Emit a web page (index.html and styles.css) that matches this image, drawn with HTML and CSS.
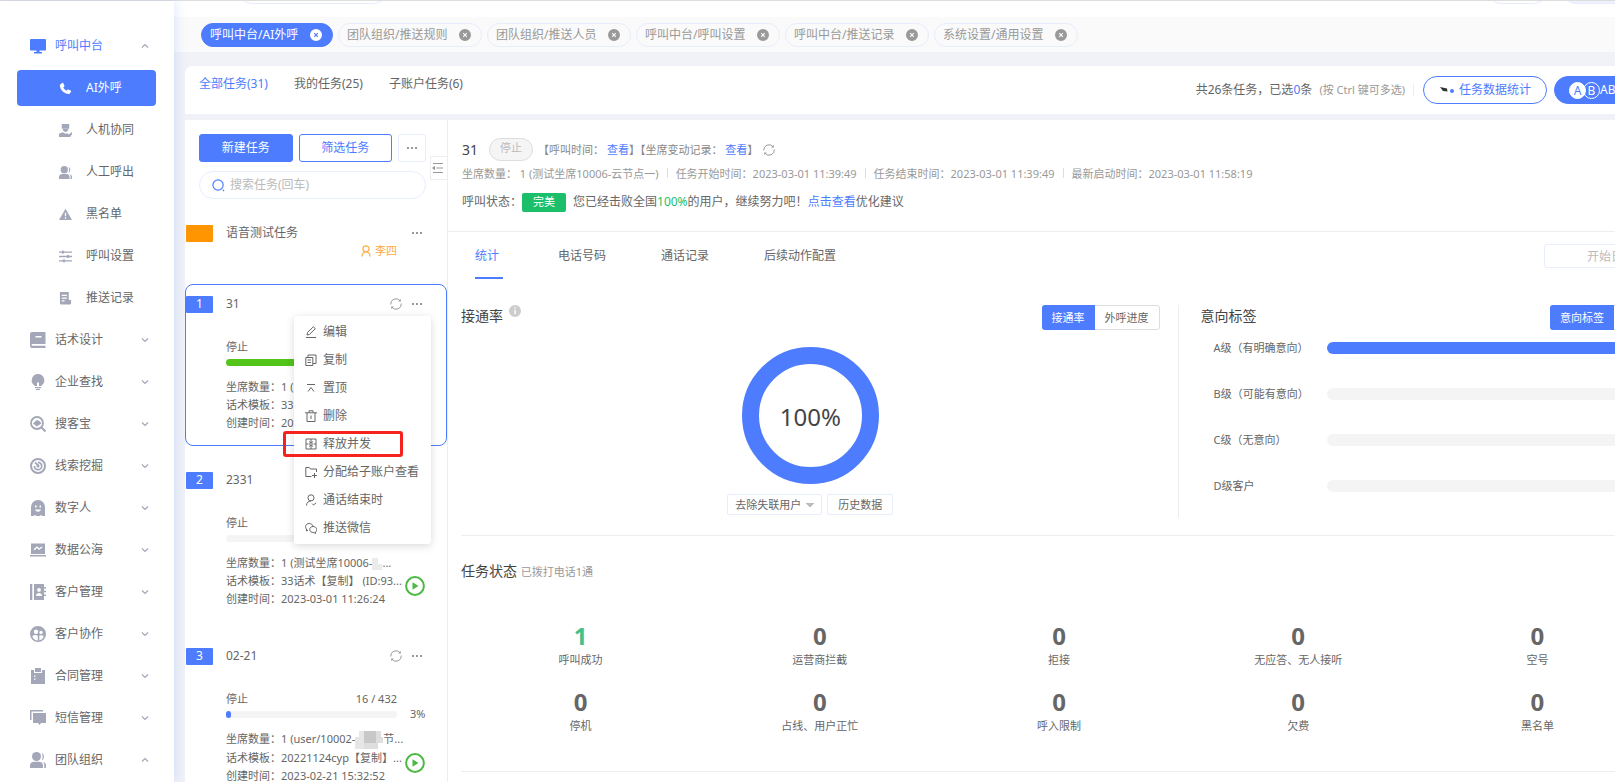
FILE: index.html
```html
<!DOCTYPE html>
<html lang="zh-CN">
  <head>
    <meta charset="utf-8">
    <title>呼叫中台 - AI外呼</title>
    <link rel="stylesheet" href="styles.css">
  </head>
  <body>
    <!-- icon sprite -->
    <svg class="sprite" aria-hidden="true">
      <symbol id="i-monitor" viewBox="0 0 16 16"><path d="M1 1h14a1 1 0 0 1 1 1v9.500a1 1 0 0 1-1 1H9.500V14H12v1.500H4V14h2.500v-1.500H1a1 1 0 0 1-1-1V2a1 1 0 0 1 1-1z"/></symbol>
      <symbol id="i-phone" viewBox="0 0 14 14"><path d="M1.300 2.600 3.400 1c.4-.3.9-.2 1.100.2l1.300 2.600c.2.4.1.8-.2 1.100l-1 .9c.8 1.500 1.900 2.600 3.500 3.500l1-1c.3-.3.7-.4 1.100-.2l2.600 1.400c.4.2.5.7.200 1l-1.600 2.100c-.3.3-.6.400-1 .4C5.200 12.500 1.200 8.600.9 3.600c0-.4.1-.7.4-1z"/></symbol>
      <symbol id="i-cowork" viewBox="0 0 14 14"><path d="M3 0h8v5H3zM4 5.500h6C10 7 9 8.500 7 8.500S4 7 4 5.500zM0 10.500 4 9l3 1.500L9 10l1.500 1.200L14 8.500V11l-2 3H0z"/></symbol>
      <symbol id="i-users" viewBox="0 0 16 16"><circle cx="6.500" cy="4.500" r="4.500"/><path d="M0 16v-2.500C0 11 2 9.800 4 9.800h5c2.200 0 4 1.400 4 3.700V16zM11.500.8a4.300 4.300 0 0 1 0 7.800C13 6 13 3.500 11.500.800zM13 10c2 .6 3 1.800 3 3.500V16h-1.700v-2.500c0-1.500-.4-2.600-1.300-3.500z"/></symbol>
      <symbol id="i-warn" viewBox="0 0 14 14"><path fill-rule="evenodd" d="M7 .8 14 13H0zM6.300 5v4h1.400V5zm0 5v1.500h1.400V10z"/></symbol>
      <symbol id="i-sliders" viewBox="0 0 14 14"><path d="M0 2.300h14M0 7h14M0 11.700h14" fill="none" stroke="currentColor" stroke-width="1.500"/><rect x="3" y=".800" width="2.500" height="3"/><rect x="8.500" y="5.500" width="2.500" height="3"/><rect x="4" y="10.200" width="2.500" height="3"/></symbol>
      <symbol id="i-record" viewBox="0 0 14 14"><path fill-rule="evenodd" d="M1 0h9.500v8.500H13V12a1.500 1.500 0 0 1-1.500 1.500H2.500A1.500 1.500 0 0 1 1 12zM3 3v1.200h5.500V3zm0 3v1.200h5.500V6zm0 3v1.200h3V9z"/></symbol>
      <symbol id="i-book" viewBox="0 0 16 16"><path fill-rule="evenodd" d="M2 0h13.500v12H2.500a.9.900 0 0 0 0 1.800h13V16H2a2 2 0 0 1-2-2V2a2 2 0 0 1 2-2zm3.500 4v1.500h6V4z"/></symbol>
      <symbol id="i-bulb" viewBox="0 0 16 16"><path d="M8 0a6.300 6.300 0 0 1 3.500 11.500V12h-2.500V8.500H7V12H4.500v-.5A6.300 6.300 0 0 1 8 0zM5 13h6v1.200H5zM6 15h4v1H6z"/></symbol>
      <symbol id="i-seek" viewBox="0 0 16 16"><circle cx="7" cy="7" r="6" fill="none" stroke="currentColor" stroke-width="1.800"/><path d="m11.500 11.500 4 4" stroke="currentColor" stroke-width="2"/><path d="M3 7.500 5.500 5l2-1L10 5.500l1.500 2L9 9l-2 1.500z"/></symbol>
      <symbol id="i-target" viewBox="0 0 16 16"><circle cx="8" cy="8" r="7" fill="none" stroke="currentColor" stroke-width="2"/><path d="M4.300 8a3.700 3.700 0 1 0 3.700-3.700M5 4.500l3.500 3" fill="none" stroke="currentColor" stroke-width="1.700"/><circle cx="8" cy="8" r="1.600"/></symbol>
      <symbol id="i-ghost" viewBox="0 0 16 16"><path fill-rule="evenodd" d="M1 7a7 7 0 0 1 14 0v9h-2.500l-1.500-1-1.500 1h-3L5 15l-1.500 1H1zm4-1.500v2h1.600v-2zm4.500 0v2H11v-2zM5 9.500C6 12.500 10 12.500 11 9.500z"/></symbol>
      <symbol id="i-laptop" viewBox="0 0 16 16"><path fill-rule="evenodd" d="M1 1.500h14v10.500H1zM3.500 7.300l1 1L7 6l2 2 3.500-2.500-.8-1L9.200 6.300 7 4.300zM0 13h16v1.500H0z"/></symbol>
      <symbol id="i-contacts" viewBox="0 0 16 16"><path fill-rule="evenodd" d="M0 0h2.300v16H0zM4 0h10v3h2v1.500h-2v2.300h2v1.500h-2v2.300h2V12h-2v4H4zm5 4a1.900 1.900 0 1 0 0 3.800A1.900 1.900 0 0 0 9 4zm-3 8h6c0-4-6-4-6 0z"/></symbol>
      <symbol id="i-team" viewBox="0 0 16 16"><path fill-rule="evenodd" d="M8 0a8 8 0 1 0 0 16A8 8 0 0 0 8 0zM6 3.500a2.200 2.200 0 1 1 0 4.400 2.200 2.200 0 0 1 0-4.400zm5 1.200a1.700 1.700 0 1 1 0 3.400 1.700 1.700 0 0 1 0-3.400zM2.300 10.500c1.500-1.800 4.200-1.800 5.500-.5v4.500c-2.500 0-4.500-1.500-5.500-4zM9.300 9.700c1.700-.7 3.500-.3 4.500.8-.8 2-2.200 3.300-4.500 3.900z"/></symbol>
      <symbol id="i-clip" viewBox="0 0 16 16"><path fill-rule="evenodd" d="M1 2h3v3h8V2h3v14H1zM5 0h6v4H5zM4 7.500v1.300h1.500V7.500zm0 3v1.300h1.500v-1.300z"/></symbol>
      <symbol id="i-sms" viewBox="0 0 16 16"><path d="M0 0h13v1.500H1.500V10H0zM3 3h13v10h-5l-1.500 2L8 13H3z"/></symbol>
      <symbol id="i-down" viewBox="0 0 8 8"><path d="M1 2.500 4 5.500l3-3" fill="none" stroke="currentColor" stroke-width="1.200"/></symbol>
      <symbol id="i-up" viewBox="0 0 8 8"><path d="m1 5.500 3-3 3 3" fill="none" stroke="currentColor" stroke-width="1.200"/></symbol>
      <symbol id="i-close" viewBox="0 0 12 12"><path fill-rule="evenodd" d="M6 0a6 6 0 1 0 0 12A6 6 0 0 0 6 0zM4.600 3.800 6 5.200l1.400-1.400.8.8L6.800 6l1.400 1.400-.8.8L6 6.800 4.600 8.200l-.8-.8L5.200 6 3.800 4.600z"/></symbol>
      <symbol id="i-search" viewBox="0 0 14 14"><circle cx="6.500" cy="6.500" r="5.500" fill="none" stroke="currentColor" stroke-width="1.300"/><path d="m11.500 11.500 1.500 1.500" stroke="currentColor" stroke-width="1.300"/></symbol>
      <symbol id="i-fold" viewBox="0 0 12 12"><path d="M1 1.500h10M4.500 6H11M1 10.500h10" fill="none" stroke="currentColor"/><path d="m0 6 3-2.200v4.400z"/></symbol>
      <symbol id="i-dots" viewBox="0 0 10 4"><rect y="1" width="2" height="2"/><rect x="4" y="1" width="2" height="2"/><rect x="8" y="1" width="2" height="2"/></symbol>
      <symbol id="i-refresh" viewBox="0 0 12 12"><path d="M.7 6.500A5.300 5.300 0 0 1 10 2.600M11.300 5.500A5.300 5.300 0 0 1 2 9.400" fill="none" stroke="currentColor"/><path d="M10.800 1v2.600H8.200zM1.200 11V8.400h2.600z"/></symbol>
      <symbol id="i-user" viewBox="0 0 12 12"><path d="M2 11.500C2 8.500 3.500 7 6 7s4 1.500 4 4.500M6 .8a3 3 0 1 1 0 6.100A3 3 0 0 1 6 .800z" fill="none" stroke="currentColor" stroke-width="1.200"/></symbol>
      <symbol id="i-play" viewBox="0 0 20 20"><circle cx="10" cy="10" r="8.900" fill="none" stroke="currentColor" stroke-width="2"/><path d="m7.500 6.300 6 3.700-6 3.700z"/></symbol>
      <symbol id="i-edit" viewBox="0 0 12 12"><path d="M1 11.500h10M2 9l.5-2.500L8.300.8l2 1.900-5.900 5.800z" fill="none" stroke="currentColor"/></symbol>
      <symbol id="i-copy" viewBox="0 0 12 12"><path d="M.8 3.500h7v8h-7zM3 3.500V1h8v8.500H8M2.500 6h3.500M2.500 8.500h3.500" fill="none" stroke="currentColor"/></symbol>
      <symbol id="i-top" viewBox="0 0 12 12"><path d="M2 2.500h8M3 9.500 6 5.500l3 4" fill="none" stroke="currentColor"/></symbol>
      <symbol id="i-trash" viewBox="0 0 12 12"><path d="M0 2.800h12M2 3v8.500h8V3M4 2.500V.800h4v1.700M6 5.500V9" fill="none" stroke="currentColor"/></symbol>
      <symbol id="i-release" viewBox="0 0 12 12"><path d="M1 1h10v10H1zM1 6h2.500M8.500 6H11M6 1v3.500M6 7.500V11M4 3.500l2 1.500 2-1.500M4 8.500 6 7l2 1.500M4 6h4" fill="none" stroke="currentColor"/></symbol>
      <symbol id="i-folder" viewBox="0 0 12 12"><path d="M6.500 10.500H.8V1.500h3.500l1.200 1.500h6v3M9.500 7v5M7 9.500h5" fill="none" stroke="currentColor"/></symbol>
      <symbol id="i-end" viewBox="0 0 12 12"><path d="M1.500 11.500C1.500 8.500 3.500 7 6 7M6 .8a3 3 0 1 1 0 6.100A3 3 0 0 1 6 .800zM7 9.500l1.500 1.500L11 9" fill="none" stroke="currentColor"/></symbol>
      <symbol id="i-wechat" viewBox="0 0 12 12"><path d="M3 8 1.500 9V7C-.5 5 .8 1.500 4.200 1.500c2 0 3.500 1.200 3.800 2.700M8 4.500c4 0 4.500 4 2.500 5.500v1.500L8.800 10.500C3.500 11 3.500 4.500 8 4.500z" fill="none" stroke="currentColor"/></symbol>
      <symbol id="i-info" viewBox="0 0 12 12"><path fill-rule="evenodd" d="M6 0a6 6 0 1 0 0 12A6 6 0 0 0 6 0zM5.300 2.500h1.400v1.300H5.300zm0 2.300h1.400v4.400H5.300z"/></symbol>
      <symbol id="i-mask" viewBox="0 0 28 18"><path d="M4 0h5v18H0V6h4z" fill="#e6e6e6"/><path d="M9 0h12v12H9z" fill="#c8c8c8"/><path d="M21 0h5v6h2v6h-7zM9 12h14v6H9z" fill="#dedede"/></symbol>
    </svg>

    <div class="app">
      <nav class="sidebar">
        <a class="nav open" href="#"><svg class="nav-icon"><use href="#i-monitor"/></svg>呼叫中台<svg class="arrow"><use href="#i-up"/></svg></a>
        <a class="nav sub active" href="#"><svg class="nav-icon"><use href="#i-phone"/></svg>AI外呼</a>
        <a class="nav sub" href="#"><svg class="nav-icon"><use href="#i-cowork"/></svg>人机协同</a>
        <a class="nav sub" href="#"><svg class="nav-icon"><use href="#i-users"/></svg>人工呼出</a>
        <a class="nav sub" href="#"><svg class="nav-icon"><use href="#i-warn"/></svg>黑名单</a>
        <a class="nav sub" href="#"><svg class="nav-icon"><use href="#i-sliders"/></svg>呼叫设置</a>
        <a class="nav sub" href="#"><svg class="nav-icon"><use href="#i-record"/></svg>推送记录</a>
        <a class="nav" href="#"><svg class="nav-icon"><use href="#i-book"/></svg>话术设计<svg class="arrow"><use href="#i-down"/></svg></a>
        <a class="nav" href="#"><svg class="nav-icon"><use href="#i-bulb"/></svg>企业查找<svg class="arrow"><use href="#i-down"/></svg></a>
        <a class="nav" href="#"><svg class="nav-icon"><use href="#i-seek"/></svg>搜客宝<svg class="arrow"><use href="#i-down"/></svg></a>
        <a class="nav" href="#"><svg class="nav-icon"><use href="#i-target"/></svg>线索挖掘<svg class="arrow"><use href="#i-down"/></svg></a>
        <a class="nav" href="#"><svg class="nav-icon"><use href="#i-ghost"/></svg>数字人<svg class="arrow"><use href="#i-down"/></svg></a>
        <a class="nav" href="#"><svg class="nav-icon"><use href="#i-laptop"/></svg>数据公海<svg class="arrow"><use href="#i-down"/></svg></a>
        <a class="nav" href="#"><svg class="nav-icon"><use href="#i-contacts"/></svg>客户管理<svg class="arrow"><use href="#i-down"/></svg></a>
        <a class="nav" href="#"><svg class="nav-icon"><use href="#i-team"/></svg>客户协作<svg class="arrow"><use href="#i-down"/></svg></a>
        <a class="nav" href="#"><svg class="nav-icon"><use href="#i-clip"/></svg>合同管理<svg class="arrow"><use href="#i-down"/></svg></a>
        <a class="nav" href="#"><svg class="nav-icon"><use href="#i-sms"/></svg>短信管理<svg class="arrow"><use href="#i-down"/></svg></a>
        <a class="nav" href="#"><svg class="nav-icon"><use href="#i-users"/></svg>团队组织<svg class="arrow"><use href="#i-up"/></svg></a>
      </nav>

      <div class="main">
        <header class="topbar">
          <input class="top-search" type="text" aria-label="搜索">
          <button class="top-btn" aria-label="消息"></button>
          <button class="top-btn filled" aria-label="账户"></button>
        </header>

        <div class="page-tabs">
          <a class="page-tab current" href="#">呼叫中台/AI外呼<svg class="icon"><use href="#i-close"/></svg></a>
          <a class="page-tab" href="#">团队组织/推送规则<svg class="icon"><use href="#i-close"/></svg></a>
          <a class="page-tab" href="#">团队组织/推送人员<svg class="icon"><use href="#i-close"/></svg></a>
          <a class="page-tab" href="#">呼叫中台/呼叫设置<svg class="icon"><use href="#i-close"/></svg></a>
          <a class="page-tab" href="#">呼叫中台/推送记录<svg class="icon"><use href="#i-close"/></svg></a>
          <a class="page-tab" href="#">系统设置/通用设置<svg class="icon"><use href="#i-close"/></svg></a>
        </div>

        <div class="scope">
          <div class="scope-tabs">
            <a class="scope-tab current" href="#">全部任务(31)</a>
            <a class="scope-tab" href="#">我的任务(25)</a>
            <a class="scope-tab" href="#">子账户任务(6)</a>
          </div>
          <p class="summary">共26条任务，已选<b>0</b>条 <small>(按 Ctrl 键可多选)</small></p>
          <button class="pill-btn">
            <svg class="stat-icon" viewBox="0 0 16 12"><path d="M1 3l7 1.500.5 3L4 7z" fill="#333"/><circle cx="13" cy="7" r="2" fill="#4d7cfe"/></svg>任务数据统计
          </button>
          <button class="pill-btn ab"><i class="ab-a">A</i><i class="ab-b">B</i>AB测试</button>
        </div>

        <div class="workspace">
          <section class="tasks">
            <div class="task-actions">
              <button class="btn primary">新建任务</button>
              <button class="btn outline">筛选任务</button>
              <button class="btn more" aria-label="更多"><svg class="dots"><use href="#i-dots"/></svg></button>
            </div>
            <label class="search">
              <svg class="search-icon"><use href="#i-search"/></svg>
              <input type="text" placeholder="搜索任务(回车)" aria-label="搜索任务">
            </label>
            <button class="fold" aria-label="收起"><svg class="icon"><use href="#i-fold"/></svg></button>

            <article class="task pinned">
              <div class="task-head">
                <span class="badge orange"></span>
                <h3>语音测试任务</h3>
                <svg class="dots"><use href="#i-dots"/></svg>
              </div>
              <p class="owner"><svg class="icon"><use href="#i-user"/></svg>李四</p>
            </article>

            <article class="task selected">
              <div class="task-head">
                <span class="badge">1</span>
                <h3>31</h3>
                <svg class="icon"><use href="#i-refresh"/></svg>
                <svg class="dots"><use href="#i-dots"/></svg>
              </div>
              <div class="task-body">
                <p class="state"><span>停止</span></p>
                <div class="progress"><span class="green" style="width: 100%"></span></div>
                <p>坐席数量：1 (测试坐席</p>
                <p>话术模板：33话术</p>
                <p>创建时间：2023-03-01</p>
              </div>
              <!-- task context menu -->
              <ul class="menu">
                <li><button><svg class="icon"><use href="#i-edit"/></svg>编辑</button></li>
                <li><button><svg class="icon"><use href="#i-copy"/></svg>复制</button></li>
                <li><button><svg class="icon"><use href="#i-top"/></svg>置顶</button></li>
                <li><button><svg class="icon"><use href="#i-trash"/></svg>删除</button></li>
                <li class="marked"><button><svg class="icon"><use href="#i-release"/></svg>释放并发</button></li>
                <li><button><svg class="icon"><use href="#i-folder"/></svg>分配给子账户查看</button></li>
                <li><button><svg class="icon"><use href="#i-end"/></svg>通话结束时</button></li>
                <li><button><svg class="icon"><use href="#i-wechat"/></svg>推送微信</button></li>
              </ul>
            </article>

            <article class="task">
              <div class="task-head">
                <span class="badge">2</span>
                <h3>2331</h3>
                <svg class="icon"><use href="#i-refresh"/></svg>
                <svg class="dots"><use href="#i-dots"/></svg>
              </div>
              <div class="task-body">
                <p class="state"><span>停止</span></p>
                <div class="progress"></div>
                <p>坐席数量：1 (测试坐席10006-<svg class="mask small" viewBox="0 0 10 12"><path d="M0 0h6v6h4v6H0z" fill="#e9ecea"/></svg>...</p>
                <p>话术模板：33话术【复制】 (ID:93...</p>
                <p>创建时间：2023-03-01 11:26:24</p>
                <button class="play" aria-label="启动"><svg><use href="#i-play"/></svg></button>
              </div>
            </article>

            <article class="task">
              <div class="task-head">
                <span class="badge">3</span>
                <h3>02-21</h3>
                <svg class="icon"><use href="#i-refresh"/></svg>
                <svg class="dots"><use href="#i-dots"/></svg>
              </div>
              <div class="task-body">
                <p class="state"><span>停止</span><span>16 / 432</span></p>
                <div class="progress"><span style="width: 3%"></span></div>
                <span class="percent">3%</span>
                <p>坐席数量：1 (user/10002-<svg class="mask"><use href="#i-mask"/></svg>节...</p>
                <p>话术模板：20221124cyp【复制】...</p>
                <p>创建时间：2023-02-21 15:32:52</p>
                <button class="play" aria-label="启动"><svg><use href="#i-play"/></svg></button>
              </div>
            </article>
          </section>

          <section class="detail">
            <div class="detail-head">
              <div class="line-title">
                <h2>31</h2>
                <span class="status">停止</span>
                <p>【呼叫时间： <a href="#">查看</a>】【坐席变动记录： <a href="#">查看</a>】</p>
                <svg class="icon"><use href="#i-refresh"/></svg>
              </div>
              <div class="line-meta">
                <span>坐席数量： 1 (测试坐席10006-云节点一)</span>
                <span>任务开始时间：2023-03-01 11:39:49</span>
                <span>任务结束时间：2023-03-01 11:39:49</span>
                <span>最新启动时间：2023-03-01 11:58:19</span>
              </div>
              <div class="line-status">
                呼叫状态：<span class="tag">完美</span>
                <p>您已经击败全国<em>100%</em>的用户，继续努力吧！<a href="#">点击查看</a>优化建议</p>
              </div>
            </div>

            <div class="detail-tabs">
              <a class="detail-tab current" href="#">统计</a>
              <a class="detail-tab" href="#">电话号码</a>
              <a class="detail-tab" href="#">通话记录</a>
              <a class="detail-tab" href="#">后续动作配置</a>
              <input class="date" type="text" placeholder="开始日期" aria-label="开始日期">
            </div>

            <div class="charts">
              <div class="connect">
                <div class="chart-head">
                  <h2>接通率</h2>
                  <svg class="icon info"><use href="#i-info"/></svg>
                  <div class="switch"><button class="on">接通率</button><button>外呼进度</button></div>
                </div>
                <div class="donut">100%</div>
                <div class="chart-tools">
                  <select aria-label="用户过滤"><option>去除失联用户</option></select>
                  <button>历史数据</button>
                </div>
              </div>
              <div class="intent">
                <div class="chart-head">
                  <h2>意向标签</h2>
                  <div class="switch"><button class="on">意向标签</button><button>客户</button></div>
                </div>
                <dl class="levels">
                  <dt>A级（有明确意向）</dt><dd class="full"></dd>
                  <dt>B级（可能有意向）</dt><dd></dd>
                  <dt>C级（无意向）</dt><dd></dd>
                  <dt>D级客户</dt><dd></dd>
                </dl>
              </div>
            </div>

            <div class="call-state">
              <h2>任务状态 <small>已拨打电话1通</small></h2>
              <ul class="counts">
                <li><b class="ok">1</b>呼叫成功</li>
                <li><b>0</b>运营商拦截</li>
                <li><b>0</b>拒接</li>
                <li><b>0</b>无应答、无人接听</li>
                <li><b>0</b>空号</li>
                <li><b>0</b>停机</li>
                <li><b>0</b>占线、用户正忙</li>
                <li><b>0</b>呼入限制</li>
                <li><b>0</b>欠费</li>
                <li><b>0</b>黑名单</li>
              </ul>
            </div>
          </section>
        </div>
      </div>
    </div>
  </body>
</html>
```
FILE: styles.css
```css
* {
  box-sizing: border-box;
}

html {
  overflow: hidden;
}

body {
  margin: 0;
  font-family: "Noto Sans", "Noto Sans CJK SC", sans-serif;
  font-size: 12px;
  line-height: 18px;
  color: #666;
  background: #f0f2f7;
}

h2, h3, p, ul, dl, dd {
  margin: 0;
  padding: 0;
  font-weight: normal;
}

ul {
  list-style: none;
}

a {
  color: #4d7cfe;
  text-decoration: none;
}

button, input, select {
  font: inherit;
  color: inherit;
  margin: 0;
  padding: 0;
  border: 0;
  background: none;
}

svg {
  fill: currentColor;
  flex: none;
}

.sprite {
  position: absolute;
  width: 0;
  height: 0;
}

.icon {
  width: 12px;
  height: 12px;
}

.dots {
  width: 10px;
  height: 4px;
  color: #999;
}

.app {
  display: flex;
  height: 100vh;
  min-width: 1680px;
  border-top: 1px solid #ddd;
}

/* sidebar */
.sidebar {
  position: relative;
  flex: none;
  width: 174px;
  padding: 24px 18px 0 17px;
  overflow-y: clip;
  background: #fff;
  box-shadow: 2px 0 10px rgba(77, 124, 254, 0.16);
}

.nav {
  display: flex;
  align-items: center;
  gap: 9px;
  height: 42px;
  padding: 0 7px 0 13px;
  color: #666;
}

.nav-icon {
  width: 16px;
  height: 16px;
  color: #a3a7b8;
}

.arrow {
  width: 8px;
  height: 8px;
  margin-left: auto;
  color: #a3a7b8;
}

.nav.open,
.nav.open .nav-icon {
  color: #4d7cfe;
}

.nav.sub {
  gap: 14px;
  padding-left: 42px;
}

.nav.sub .nav-icon {
  width: 13px;
  height: 13px;
}

.nav.active {
  height: 36px;
  margin: 3px 0;
  border-radius: 4px;
  background: #4d7cfe;
}

.nav.active,
.nav.active .nav-icon {
  color: #fff;
}

/* main column */
.main {
  flex: 1;
  display: flex;
  flex-direction: column;
  min-width: 0;
}

.topbar {
  display: flex;
  align-items: flex-end;
  gap: 14px;
  height: 16px;
  padding: 0 48px 13px 64px;
  overflow: hidden;
  background: #fff;
}

.top-search {
  width: 150px;
  height: 28px;
  margin-right: auto;
  border: 1px solid #e6ebfd;
  border-radius: 14px;
}

.top-btn {
  width: 61px;
  height: 28px;
  border: 1px solid #e6ebfd;
  border-radius: 14px;
}

.top-btn.filled {
  width: 70px;
  background: #eef1fe;
}

.page-tabs {
  display: flex;
  align-items: center;
  gap: 5px;
  height: 35px;
  padding-left: 27px;
  background: #fafafa;
}

.page-tab {
  display: flex;
  justify-content: space-between;
  align-items: center;
  min-width: 144px;
  height: 24px;
  padding: 0 10px 0 8px;
  border: 1px solid #e8edfd;
  border-radius: 12px;
  color: #999;
}

.page-tab.current {
  min-width: 132px;
  border-color: #4d7cfe;
  background: #4d7cfe;
  color: #fff;
}

.scope {
  display: flex;
  align-items: center;
  height: 48px;
  margin: 14px 8px 6px 11px;
  padding: 0 15px 0 14px;
  border-radius: 8px 8px 0 0;
  background: #fff;
}

.scope-tabs {
  display: flex;
  gap: 26px;
  margin-right: auto;
}

.scope-tab {
  display: flex;
  flex-direction: column;
  align-items: center;
  height: 30px;
  color: #666;
}

.scope-tab.current {
  color: #4d7cfe;
}

.scope-tab.current::after {
  content: "";
  width: 28px;
  height: 1px;
  margin-top: 12px;
  background: #4d7cfe;
}

.summary {
  margin-right: 9px;
  padding-right: 8px;
  border-right: 1px solid #eee;
  line-height: 12px;
}

.summary b {
  color: #4d7cfe;
  font-weight: normal;
}

.summary small {
  margin-left: 4px;
  font-size: 11px;
  color: #999;
}

.pill-btn {
  display: flex;
  align-items: center;
  justify-content: center;
  gap: 4px;
  width: 124px;
  height: 28px;
  border: 1px solid #4d7cfe;
  border-radius: 14px;
  color: #4d7cfe;
}

.stat-icon {
  width: 16px;
  height: 12px;
}

.pill-btn.ab {
  justify-content: flex-start;
  gap: 0;
  width: 103px;
  margin-left: 7px;
  padding-left: 14px;
  background: #4d7cfe;
  color: #fff;
}

.ab-a,
.ab-b {
  width: 17px;
  height: 17px;
  border: 1px solid #fff;
  border-radius: 50%;
  font-style: normal;
  line-height: 15px;
  text-align: center;
}

.ab-a {
  background: #fff;
  color: #4d7cfe;
}

.ab-b {
  margin-left: -3px;
}

.workspace {
  flex: 1;
  display: flex;
  min-height: 0;
  margin: 0 8px 0 11px;
  background: #fff;
}

/* task list */
.tasks {
  position: relative;
  flex: none;
  width: 263px;
  overflow-y: clip;
  border-right: 1px solid #eee;
}

.task-actions {
  display: flex;
  gap: 6px;
  padding: 14px 21px 0 14px;
}

.btn {
  flex: 1;
  height: 28px;
  border: 1px solid #4d7cfe;
  border-radius: 3px;
}

.btn.primary {
  background: #4d7cfe;
  color: #fff;
}

.btn.outline {
  color: #4d7cfe;
}

.btn.more {
  display: flex;
  flex: none;
  align-items: center;
  justify-content: center;
  width: 28px;
  border-color: #e8edfd;
}

.search {
  display: flex;
  align-items: center;
  gap: 5px;
  height: 28px;
  margin: 9px 21px 14px 14px;
  padding-left: 12px;
  border: 1px solid #e8edfd;
  border-radius: 14px;
}

.search-icon {
  width: 13px;
  height: 13px;
  color: #4d7cfe;
}

.search input {
  flex: 1;
  min-width: 0;
}

::placeholder {
  color: #bbb;
  opacity: 1;
}

/* sits on the panel edge */
.fold {
  position: absolute;
  top: 36px;
  right: 0;
  width: 17px;
  height: 24px;
  padding-left: 1px;
  border: 1px solid #eee;
  border-right: 0;
  color: #999;
}

.fold .icon {
  display: block;
}

.task {
  position: relative;
  height: 162px;
  margin-bottom: 14px;
  padding-top: 10px;
  border: 1px solid transparent;
  border-radius: 8px;
}

.task.pinned {
  height: 57px;
}

.task.selected {
  border-color: #4d7cfe;
}

.task-head {
  display: flex;
  align-items: center;
  gap: 10px;
  height: 18px;
  padding-right: 24px;
}

.task-head .icon {
  color: #999;
}

.badge {
  width: 27px;
  height: 17px;
  margin-right: 3px;
  border-radius: 1px;
  background: #4d7cfe;
  color: #fff;
  line-height: 15px;
  text-align: center;
}

.badge.orange {
  background: #ff9500;
}

.task-head h3 {
  flex: 1;
  font-size: 12px;
}

.owner {
  display: flex;
  align-items: center;
  justify-content: flex-end;
  gap: 3px;
  padding-right: 49px;
  font-size: 11px;
  color: #ffa940;
}

.task-body {
  position: relative;
  width: 211px;
  padding: 25px 0 0 40px;
  font-size: 11px;
  white-space: nowrap;
}

.state {
  display: flex;
  justify-content: space-between;
}

.progress {
  height: 7px;
  margin: 3px 0 12px;
  border-radius: 4px;
  background: #f4f4f4;
}

.progress span {
  display: block;
  min-width: 5px;
  height: 7px;
  border-radius: 4px;
  background: #4d7cfe;
}

.progress .green {
  background: #52c41a;
}

/* right of the bar, outside the text column */
.percent {
  position: absolute;
  top: 40px;
  left: 224px;
}

.play {
  position: absolute;
  right: -28px;
  bottom: 12px;
  color: #4cb944;
}

.play svg {
  display: block;
  width: 20px;
  height: 20px;
}

.mask {
  width: 28px;
  height: 18px;
  vertical-align: middle;
}

.mask.small {
  width: 10px;
  height: 12px;
}

.menu {
  position: absolute;
  z-index: 2;
  top: 31px;
  left: 108px;
  width: 137px;
  padding: 2px 0;
  border-radius: 3px;
  background: #fff;
  box-shadow: 0 2px 8px rgba(0, 0, 0, 0.15);
}

.menu li {
  position: relative;
}

.menu button {
  display: flex;
  align-items: center;
  gap: 6px;
  width: 100%;
  height: 28px;
  padding-left: 11px;
}

.menu .marked::after {
  content: "";
  position: absolute;
  top: 1px;
  right: 28px;
  bottom: 1px;
  left: -11px;
  border: 3px solid #f5221d;
  border-radius: 3px;
}

/* detail */
.detail {
  flex: 1;
  min-width: 0;
}

.detail-head {
  height: 112px;
  padding: 18px 14px 0;
  border-bottom: 1px solid #eee;
}

.line-title {
  display: flex;
  align-items: center;
  height: 23px;
  font-size: 11px;
}

h2 {
  font-size: 14px;
  color: #444;
}

.line-title p {
  margin-right: 5px;
  color: #888;
}

.status {
  width: 44px;
  height: 23px;
  margin: 0 5px 0 11px;
  border: 1px solid #ddd;
  border-radius: 12px;
  background: #f5f5f5;
  color: #bbb;
  text-align: center;
}

.line-title .icon {
  color: #999;
}

.line-meta {
  display: flex;
  margin: 4px 0 8px;
  font-size: 11px;
  color: #999;
}

.line-meta span + span::before {
  content: "";
  display: inline-block;
  width: 1px;
  height: 10px;
  margin: 0 8px;
  background: #ddd;
}

.line-status {
  display: flex;
  align-items: center;
  height: 22px;
}

.tag {
  width: 44px;
  height: 19px;
  margin-right: 7px;
  border-radius: 2px;
  background: #1bbf6a;
  color: #fff;
  font-size: 11px;
  text-align: center;
}

.line-status em {
  color: #1bbf6a;
  font-style: normal;
}

.detail-tabs {
  display: flex;
  align-items: flex-start;
  gap: 55px;
  height: 48px;
  padding: 12px 15px 0 27px;
}

.detail-tab {
  min-width: 28px;
  height: 35px;
  padding-top: 3px;
  color: #666;
}

.detail-tab.current {
  border-bottom: 2px solid #4d7cfe;
  color: #4d7cfe;
}

.date {
  width: 113px;
  height: 24px;
  margin-left: auto;
  padding-left: 42px;
  border: 1px solid #e8edfd;
  border-radius: 3px;
}

.charts {
  display: grid;
  grid-template-columns: 3fr 2fr;
  margin: 0 15px 0 13px;
  padding: 25px 0 17px;
  border-bottom: 1px solid #eee;
}

.connect {
  padding: 0 18px 3px 0;
  border-right: 1px solid #eee;
}

.intent {
  padding-left: 22px;
}

.chart-head {
  display: flex;
  height: 25px;
}

.chart-head h2 {
  line-height: 22px;
}

.info {
  margin-left: 6px;
  color: #ccc;
}

.switch {
  display: flex;
  margin-left: auto;
  border: 1px solid #ddd;
  border-radius: 3px;
  font-size: 11px;
}

.switch button {
  padding: 0 10px;
}

.switch .on {
  margin: -1px 0 -1px -1px;
  border-radius: 3px 0 0 3px;
  background: #4d7cfe;
  color: #fff;
}

.donut {
  width: 137px;
  height: 137px;
  margin: 17px auto 10px;
  border: 17px solid #4d7cfe;
  border-radius: 50%;
  font-size: 24px;
  line-height: 105px;
  text-align: center;
  color: #444;
}

.chart-tools {
  display: flex;
  justify-content: center;
  gap: 5px;
  font-size: 11px;
}

.chart-tools select,
.chart-tools button {
  height: 21px;
  padding: 0 10px;
  border: 1px solid #e8edfd;
  border-radius: 2px;
}

.chart-tools select {
  width: 95px;
  padding: 0 7px;
  appearance: none;
  background: linear-gradient(to bottom right, #bbb 50%, transparent 50%) 82px 8px / 4px 5px no-repeat,
    linear-gradient(to bottom left, #bbb 50%, transparent 50%) 78px 8px / 4px 5px no-repeat;
}

.levels {
  display: grid;
  grid-template-columns: 99px 1fr;
  row-gap: 28px;
  column-gap: 14px;
  padding: 9px 0 0 13px;
  font-size: 11px;
  white-space: nowrap;
}

.levels dd {
  height: 12px;
  margin-top: 3px;
  border-radius: 6px;
  background: #f4f4f4;
}

.levels .full {
  background: #4d7cfe;
}

.call-state {
  margin: 0 15px 0 13px;
  padding-top: 26px;
  border-bottom: 1px solid #eee;
}

.call-state small {
  font-size: 11px;
  color: #999;
}

.counts {
  display: grid;
  grid-template-columns: repeat(5, 1fr);
  row-gap: 18px;
  padding: 40px 0 36px;
  font-size: 11px;
  text-align: center;
}

.counts b {
  display: block;
  font-size: 24px;
  line-height: 30px;
}

.counts .ok {
  color: #44c08a;
}
```
